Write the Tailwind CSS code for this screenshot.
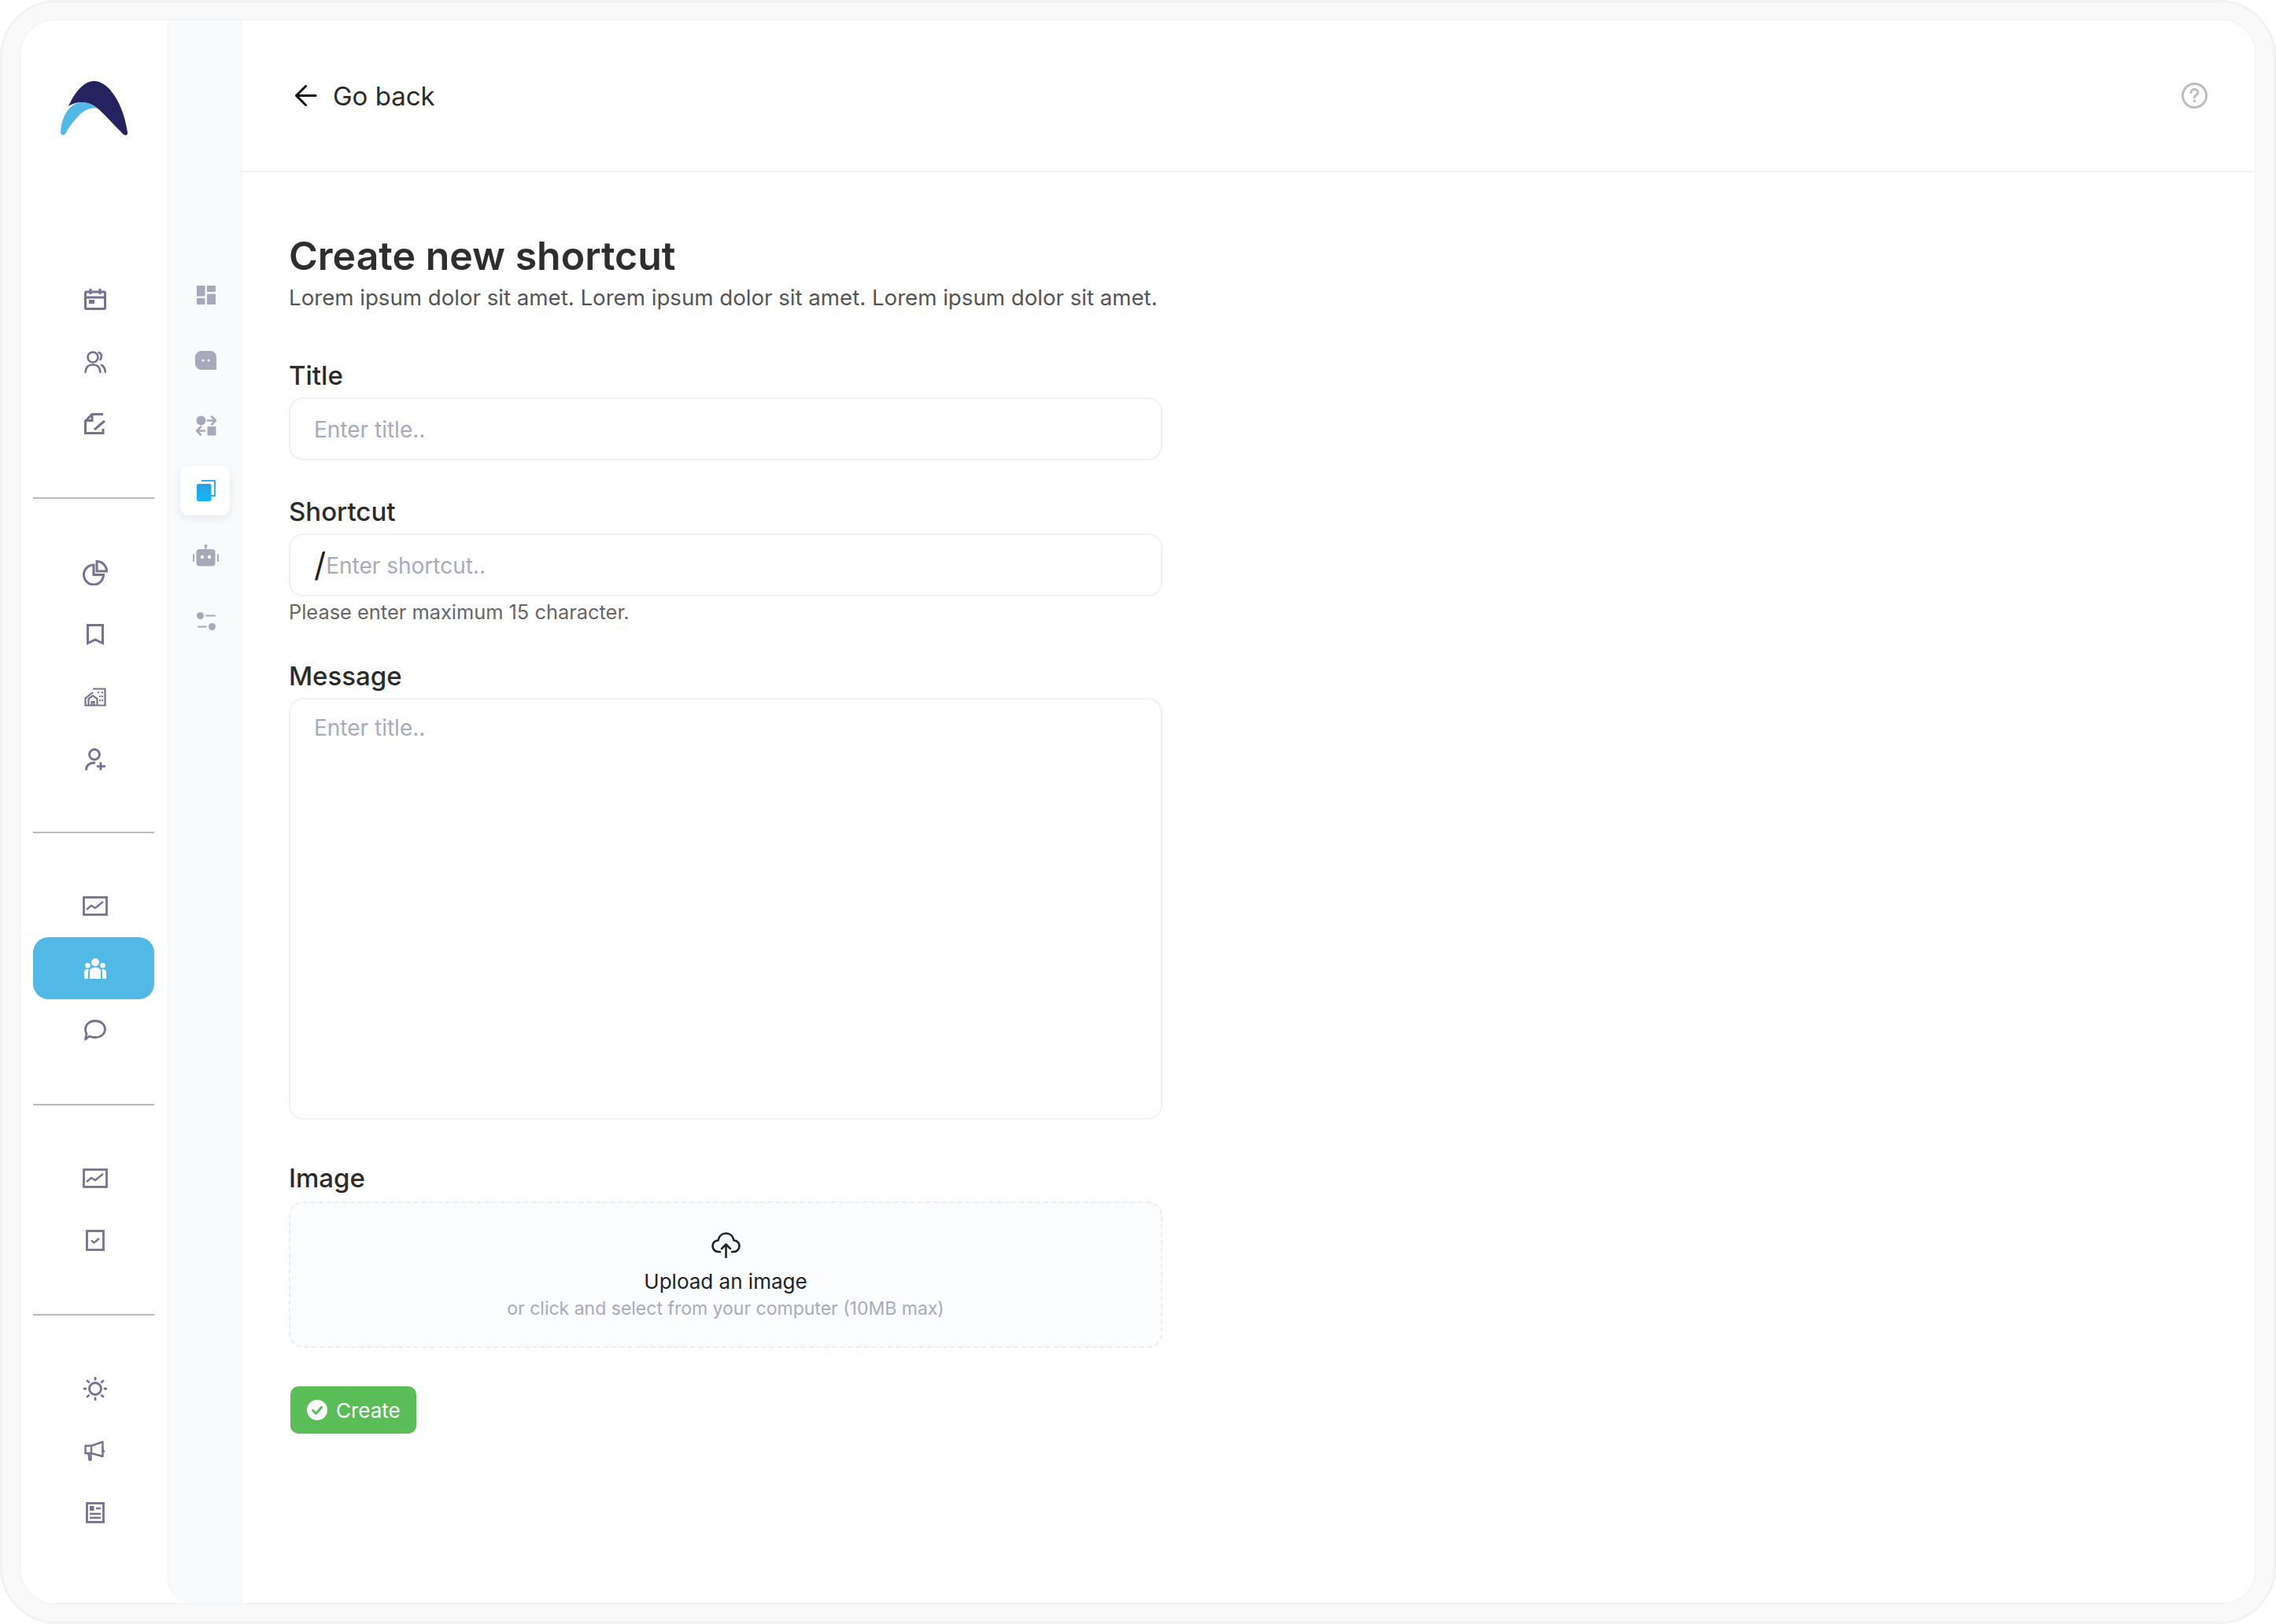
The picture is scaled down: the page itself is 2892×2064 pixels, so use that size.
<!DOCTYPE html>
<html lang="en">

<head>
  <meta charset="UTF-8">
  <meta name="viewport" content="width=device-width, initial-scale=1.0">
  <title>Create new shortcut</title>
  <script src="https://cdn.jsdelivr.net/npm/@tailwindcss/browser@4"></script>
</head>

<body class="bg-white font-['Inter',sans-serif]">
  <div class="h-[2064px] w-[2892px] rounded-[72px] border-[3px] border-[#f1f2f3] bg-[#f9f9fa] px-[22px] pt-[21px] pb-[22px]">
    <div class="flex h-full overflow-hidden rounded-[44px] border-2 border-[#f4f5f6] bg-white">

      <!-- main sidebar -->
      <aside class="w-[186px] shrink-0 pl-[15px] pr-[17px] pt-[77px] text-[#75738f]">
        <div class="flex justify-center">
          <svg width="85" height="70" viewBox="0 0 85 70">
            <path fill="#24235f" d="M10 32C18 14 30 0 42 0C62 0 80 30 85 65C85.5 69 82 70 79 67C65 53 55 41 46 34C36 26 22 24 10 32Z" />
            <path fill="#52b8e6" d="M0 64C2 45 10 29 26 27C34 26.500 41 30 46 34.500C38 33 30 37 24 43C17 50 11 58 6 67C3 70 0 69 0 64Z" />
          </svg>
        </div>

        <div class="mt-[168px] flex flex-col">
          <div class="flex h-[79px] items-center justify-center pl-[3px]">
            <svg width="28" height="27" viewBox="0 0 28 27" fill="none" stroke="currentColor" stroke-width="3">
              <rect x="1.5" y="4" width="25" height="21.5" rx="1" />
              <path d="M1.5 11H26.5M8 0V7M20 0V7" />
              <rect x="6" y="14" width="7" height="5" fill="currentColor" stroke="none" />
            </svg>
          </div>
          <div class="flex h-[79px] items-center justify-center pl-[3px]">
            <svg width="28" height="28" viewBox="0 0 28 28" fill="none" stroke="currentColor" stroke-width="2.6" stroke-linecap="round">
              <circle cx="11" cy="8" r="6.5" />
              <path d="M1.5 27C2 20 6 17.500 11 17.500S20 20 20.500 27M18.500 2C22 3 23 7 20.500 11M22 18C25 19.500 26.500 23 27 27" />
            </svg>
          </div>
          <div class="flex h-[79px] items-center justify-center pl-[3px]">
            <svg width="27" height="27" viewBox="0 0 27 27" fill="none" stroke="currentColor" stroke-width="3">
              <path d="M24 1.500H10L1.500 10V25.500H24V20M13 21L26 10M10 1.500V9.500H1.500" />
            </svg>
          </div>
        </div>

        <div class="my-[54px] h-[2px] bg-[#b9b7cb]"></div>

        <div class="flex flex-col">
          <div class="flex h-[79px] items-center justify-center pl-[3px]">
            <svg width="32" height="32" viewBox="0 0 32 32" fill="none" stroke="currentColor" stroke-width="3">
              <path d="M14 6A12.500 12.500 0 1 0 26.500 18.500H14Z" />
              <path d="M18 1.500A12.500 12.500 0 0 1 30.500 14H18Z" />
            </svg>
          </div>
          <div class="flex h-[79px] items-center justify-center pl-[3px]">
            <svg width="22" height="27" viewBox="0 0 22 27" fill="none" stroke="currentColor" stroke-width="3">
              <path d="M1.500 1.500H20.500V24.500L11 20L1.500 24.500Z" />
            </svg>
          </div>
          <div class="flex h-[79px] items-center justify-center pl-[3px]">
            <svg width="28" height="24" viewBox="0 0 28 24" fill="none" stroke="currentColor" stroke-width="2.200">
              <path d="M11 1.500H26.500V22.500H1.500V13.500L11 6" />
              <path d="M5.500 22.500V14L11 10L16.500 14V22.500M9.500 22.500V18H12.500V22.500" />
              <path d="M17 6H19M22 6H24M19 11H21M22 11H24M19 16H21M22 16H24" stroke-width="2" />
            </svg>
          </div>
          <div class="flex h-[79px] items-center justify-center pl-[3px]">
            <svg width="26" height="28" viewBox="0 0 26 28" fill="none" stroke="currentColor" stroke-width="2.800" stroke-linecap="round">
              <circle cx="12" cy="8" r="6.500" />
              <path d="M1.500 27C2 21 6 18.500 12 18.500M20 19V27M16 23H25" />
            </svg>
          </div>
        </div>

        <div class="mt-[53px] mb-[53px] h-[2px] bg-[#b9b7cb]"></div>

        <div class="flex flex-col">
          <div class="flex h-[79px] items-center justify-center pl-[3px]">
            <svg width="32" height="25" viewBox="0 0 32 25" fill="none" stroke="currentColor" stroke-width="2.800">
              <rect x="1.500" y="1.500" width="29" height="22" />
              <path d="M5 17L11 12L16 15L26 7" stroke-width="2.400" />
            </svg>
          </div>
          <div class="flex h-[79px] items-center justify-center rounded-[20px] bg-[#52b8e6] pl-[3px]">
            <svg width="28" height="26" viewBox="0 0 28 26" fill="#ffffff">
              <circle cx="14" cy="5" r="5" />
              <circle cx="4.500" cy="9" r="3.200" />
              <circle cx="23.500" cy="9" r="3.200" />
              <path d="M7 26V17C7 13 10 11.500 14 11.500S21 13 21 17V26Z" />
              <path d="M0 26V18C0 15 1.500 13.500 5 13.500C5.500 13.500 5.800 14 5.500 15C5.200 16 5 17 5 18V26Z" />
              <path d="M28 26V18C28 15 26.500 13.500 23 13.500C22.500 13.500 22.200 14 22.500 15C22.800 16 23 17 23 18V26Z" />
            </svg>
          </div>
          <div class="flex h-[79px] items-center justify-center pl-[3px]">
            <svg width="28" height="27" viewBox="0 0 28 27" fill="none" stroke="currentColor" stroke-width="2.800" stroke-linejoin="round">
              <path d="M14 1.500C21 1.500 26.500 6 26.500 12S21 22.500 14 22.500C11 22.500 8.500 22 6.500 21L1.500 25L3 18C2 16.500 1.500 14.500 1.500 12C1.500 6 7 1.500 14 1.500Z" />
            </svg>
          </div>
        </div>

        <div class="mt-[54px] mb-[53px] h-[2px] bg-[#b9b7cb]"></div>

        <div class="flex flex-col">
          <div class="flex h-[79px] items-center justify-center pl-[3px]">
            <svg width="32" height="25" viewBox="0 0 32 25" fill="none" stroke="currentColor" stroke-width="2.800">
              <rect x="1.500" y="1.500" width="29" height="22" />
              <path d="M5 17L11 12L16 15L26 7" stroke-width="2.400" />
            </svg>
          </div>
          <div class="flex h-[79px] items-center justify-center pl-[3px]">
            <svg width="24" height="27" viewBox="0 0 24 27" fill="none" stroke="currentColor" stroke-width="2.800">
              <rect x="1.500" y="1.500" width="21" height="24" />
              <path d="M7 13.500L10.500 16.500L17 11" stroke-width="2.400" />
            </svg>
          </div>
        </div>

        <div class="mt-[54px] mb-[53px] h-[2px] bg-[#b9b7cb]"></div>

        <div class="flex flex-col">
          <div class="flex h-[79px] items-center justify-center pl-[3px]">
            <svg width="30" height="30" viewBox="0 0 30 30" fill="none" stroke="currentColor" stroke-width="2.800" stroke-linecap="round">
              <circle cx="15" cy="15" r="7.500" />
              <path d="M15 1V3M15 27V29M1 15H3M27 15H29M5 5L6.800 6.500M25 5L23.200 6.500M5 25L6.800 23.500M25 25L23.200 23.500" />
            </svg>
          </div>
          <div class="flex h-[79px] items-center justify-center pl-[3px]">
            <svg width="27" height="26" viewBox="0 0 27 26" fill="none" stroke="currentColor" stroke-width="2.400" stroke-linejoin="round">
              <path d="M1.500 6.500H9L23.500 1.500V20L9 16H1.500Z" />
              <path d="M9 6.500V16M5.500 16L6.500 24.500H8.500L8.500 16M23.500 8V13.500H26" />
            </svg>
          </div>
          <div class="flex h-[79px] items-center justify-center pl-[3px]">
            <svg width="24" height="27" viewBox="0 0 24 27" fill="none" stroke="currentColor" stroke-width="2.800">
              <rect x="1.500" y="1.500" width="21" height="24" />
              <rect x="5" y="5" width="5.500" height="6" fill="currentColor" stroke="none" />
              <path d="M13 8H19M5 15H19M5 20H19" stroke-width="2.400" />
            </svg>
          </div>
        </div>
      </aside>

      <!-- sub sidebar -->
      <aside class="flex w-[95px] shrink-0 flex-col rounded-bl-[30px] border-r-2 border-l-2 border-[#f4f5f6] bg-[#f8fafc] pt-[307px] text-[#a7a9bb]">
        <div class="flex h-[83px] items-center justify-center pl-[2px]">
          <svg width="24" height="24" viewBox="0 0 24 24" fill="currentColor">
            <rect width="10.500" height="13.500" rx="1" />
            <rect x="13" width="11" height="8" rx="1" />
            <rect y="16" width="10.500" height="8" rx="1" />
            <rect x="13" y="10.500" width="11" height="13.500" rx="1" />
          </svg>
        </div>
        <div class="flex h-[83px] items-center justify-center pl-[2px]">
          <svg width="27" height="24" viewBox="0 0 27 24" fill="currentColor">
            <path d="M8 0H19C23.500 0 27 3.500 27 8V24H8C3.500 24 0 20.500 0 16V8C0 3.500 3.500 0 8 0Z" />
            <circle cx="10" cy="12" r="1.500" fill="#ffffff" />
            <circle cx="17" cy="12" r="1.500" fill="#ffffff" />
          </svg>
        </div>
        <div class="flex h-[83px] items-center justify-center pl-[2px]">
          <svg width="26" height="26" viewBox="0 0 26 26" fill="none">
            <circle cx="6.500" cy="6.500" r="6" fill="currentColor" />
            <rect x="14.500" y="14" width="11" height="11.500" rx="1" fill="currentColor" />
            <path d="M15 6.500H24.500M20 1.500L25 6.500L20 11.500M11 19.500H1.500M6 14.500L1 19.500L6 24.500" stroke="currentColor" stroke-width="2.500" stroke-linecap="round" stroke-linejoin="round" />
          </svg>
        </div>
        <div class="flex h-[83px] items-center justify-center">
          <div class="flex h-[63px] w-[63px] items-center justify-center rounded-[11px] bg-white pl-[2px] shadow-[0_4px_12px_rgba(30,41,59,0.08)]">
            <svg width="24" height="27" viewBox="0 0 24 27">
              <defs>
                <linearGradient id="copyFill" x1="0" y1="0" x2="0" y2="1">
                  <stop offset="0" stop-color="#2b9fe0" />
                  <stop offset="1" stop-color="#12b6fb" />
                </linearGradient>
              </defs>
              <path d="M6 1H23V20H18" fill="none" stroke="#38aee9" stroke-width="2" />
              <rect y="5" width="18.500" height="22" rx="2" fill="url(#copyFill)" />
            </svg>
          </div>
        </div>
        <div class="flex h-[83px] items-center justify-center pb-[2px] pl-[2px]">
          <svg width="33" height="28" viewBox="0 0 33 28" fill="currentColor">
            <rect x="15.500" y="0" width="2" height="7" />
            <circle cx="16.500" cy="2" r="2" />
            <rect x="4.500" y="6" width="24" height="21.500" rx="4" />
            <rect x="0" y="12" width="2" height="10" rx="1" />
            <rect x="31" y="12" width="2" height="10" rx="1" />
            <circle cx="12" cy="16" r="2.200" fill="#ffffff" />
            <circle cx="21" cy="16" r="2.200" fill="#ffffff" />
          </svg>
        </div>
        <div class="flex h-[83px] items-center justify-center pl-[2px]">
          <svg width="24" height="23" viewBox="0 0 24 23" fill="currentColor">
            <circle cx="4.500" cy="4.500" r="4.500" />
            <circle cx="19.500" cy="18.500" r="4.500" />
            <rect x="11" y="3.500" width="13" height="2" rx="1" />
            <rect x="1" y="17.500" width="12" height="2" rx="1" />
          </svg>
        </div>
      </aside>

      <!-- main -->
      <main class="flex-1">
        <header class="flex h-[193px] items-center justify-between border-b-2 border-[#f1f2f3] pl-[67px] pr-[60px]">
          <a href="#" class="flex items-center gap-[20px] text-[33px] leading-[40px] text-[#2b2b2b]">
            <svg width="28" height="27" viewBox="0 0 28 27" fill="none" stroke="#111111" stroke-width="3" stroke-linecap="round" stroke-linejoin="round">
              <path d="M26 13.500H2M13.500 1.500L1.500 13.500L13.500 25.500" />
            </svg>
            <span>Go back</span>
          </a>
          <svg width="33" height="33" viewBox="0 0 33 33" fill="none" stroke="#bdbdbd" stroke-width="3">
            <circle cx="16.500" cy="16.500" r="15" />
            <path d="M12 12.500C12 10 14 8.500 16.500 8.500S21 10 21 12.500C21 15.500 16.500 15.500 16.500 19" stroke-linecap="round" />
            <circle cx="16.500" cy="23.500" r="1.800" fill="#bdbdbd" stroke="none" />
          </svg>
        </header>

        <div class="w-[1169px] pl-[59px] pt-[76px]">
          <h1 class="text-[50px] leading-[60px] font-semibold text-[#2e2e2e]">Create new shortcut</h1>
          <p class="mt-[3px] text-[27.650px] leading-[40px] whitespace-nowrap text-[#555555]">Lorem ipsum dolor sit amet. Lorem ipsum dolor sit amet. Lorem ipsum dolor sit amet.</p>

          <label class="mt-[59px] block text-[33px] leading-[40px] font-medium text-[#2b2b2b]">Title</label>
          <input type="text" placeholder="Enter title.." class="mt-[8px] block h-[80px] w-full rounded-[18px] border-2 border-[#f1f2f4] px-[30px] pt-[2px] text-[28px] outline-none placeholder:text-[#a9abbb]">

          <label class="mt-[45px] block text-[33px] leading-[40px] font-medium text-[#2b2b2b]">Shortcut</label>
          <div class="mt-[8px] flex h-[80px] items-center rounded-[18px] border-2 border-[#f1f2f4] px-[30px]">
            <span class="text-[42px] leading-[40px] text-[#222222]">/</span>
            <input type="text" placeholder="Enter shortcut.." class="w-full pt-[2px] text-[28px] outline-none placeholder:text-[#a9abbb]">
          </div>
          <p class="mt-[2px] text-[25.400px] leading-[36px] text-[#666666]">Please enter maximum 15 character.</p>

          <label class="mt-[43px] block text-[33px] leading-[40px] font-medium text-[#2b2b2b]">Message</label>
          <textarea placeholder="Enter title.." class="mt-[8px] block h-[536px] w-full resize-none rounded-[18px] border-2 border-[#f1f2f4] px-[30px] py-[16px] text-[28px] leading-[40px] outline-none placeholder:text-[#a9abbb]"></textarea>

          <label class="mt-[54px] block text-[33px] leading-[40px] font-medium text-[#2b2b2b]">Image</label>
          <div class="mt-[10px] flex h-[186px] flex-col items-center rounded-[18px] border-2 border-dashed border-[#eceef0] bg-[#fbfcfd] pt-[37px]">
            <svg width="37" height="33" viewBox="0 0 37 33" fill="none" stroke="#222222" stroke-width="2.600" stroke-linecap="round" stroke-linejoin="round">
              <path d="M11 25H9C4.500 25 1.500 21.500 1.500 17.500C1.500 13.500 4.500 10.500 8.500 10.500C9.500 5 13.500 1.500 18.500 1.500S27.500 5 28.500 10.500C32.500 10.500 35.500 13.500 35.500 17.500C35.500 21.500 32.500 25 28 25H26" />
              <path d="M18.500 32V16M13 21L18.500 15.500L24 21" />
            </svg>
            <span class="mt-[13px] text-[26px] leading-[34px] text-[#222222]">Upload an image</span>
            <span class="mt-[1px] text-[23px] leading-[32px] text-[#a9abbb]">or click and select from your computer (10MB max)</span>
          </div>

          <button class="mt-[49px] ml-[2px] flex h-[60px] w-[160px] items-center gap-[11px] rounded-[10px] bg-[#5bbd58] pl-[21px] text-[26px] text-white">
            <svg width="26" height="26" viewBox="0 0 26 26">
              <circle cx="13" cy="13" r="13" fill="#ffffff" />
              <path d="M7.500 13.500L11.500 17.500L18.500 9.500" fill="none" stroke="#5bbd58" stroke-width="3" stroke-linecap="round" stroke-linejoin="round" />
            </svg>
            <span>Create</span>
          </button>
        </div>
      </main>
    </div>
  </div>
</body>

</html>
